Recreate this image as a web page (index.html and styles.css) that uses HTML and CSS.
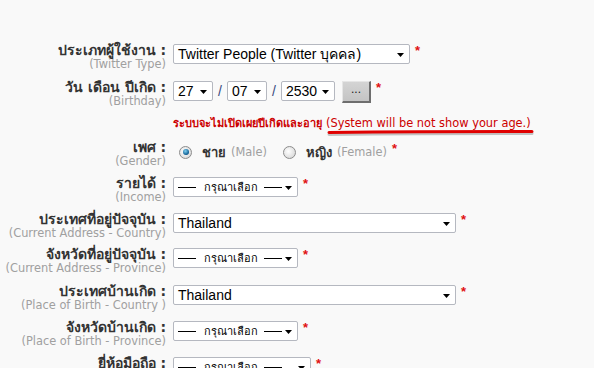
FILE: index.html
```html
<!DOCTYPE html>
<html lang="th">
<head>
<meta charset="utf-8">
<link rel="stylesheet" href="styles.css">
</head>
<body>
<div class="form">
  <div class="row r37">
    <div class="lbl"><div class="th">ประเภทผู้ใช้งาน :</div><div class="en">(Twitter Type)</div></div>
    <div class="field"><div class="sel" style="width:237px">Twitter People (Twitter บุคคล)<svg class="arr" width="7" height="4" viewBox="0 0 7 4"><path d="M0 0H7L3.5 4Z"/></svg></div><span class="req">*</span></div>
  </div>
  <div class="row r33">
    <div class="lbl"><div class="th">วัน เดือน ปีเกิด :</div><div class="en">(Birthday)</div></div>
    <div class="field">
      <div class="sel" style="width:40px">27<svg class="arr" width="7" height="4" viewBox="0 0 7 4"><path d="M0 0H7L3.5 4Z"/></svg></div>
      <span class="slash">/</span>
      <div class="sel" style="width:40px">07<svg class="arr" width="7" height="4" viewBox="0 0 7 4"><path d="M0 0H7L3.5 4Z"/></svg></div>
      <span class="slash">/</span>
      <div class="sel" style="width:54px">2530<svg class="arr" width="7" height="4" viewBox="0 0 7 4"><path d="M0 0H7L3.5 4Z"/></svg></div>
      <span class="btn">...</span><span class="req">*</span>
    </div>
  </div>
  <div class="row r27">
    <div></div>
    <div class="note"><b>ระบบจะไม่เปิดเผยปีเกิดและอายุ</b><span class="gap"></span>(System will be not show your age.)
      <svg class="mark" width="210" height="10" viewBox="0 0 210 10"><path class="sh" d="M3 5.5 Q100 4.5 206 4.5"/><path class="ln" d="M3 3.5 Q100 2.5 206 2.5"/></svg>
    </div>
  </div>
  <div class="row r36">
    <div class="lbl"><div class="th">เพศ :</div><div class="en">(Gender)</div></div>
    <div class="field gender">
      <span class="radio on"></span><b class="opt">ชาย</b><span class="en">(Male)</span>
      <span class="radio r2"></span><b class="opt">หญิง</b><span class="en">(Female)</span><span class="req">*</span>
    </div>
  </div>
  <div class="row r36">
    <div class="lbl"><div class="th">รายได้ :</div><div class="en">(Income)</div></div>
    <div class="field"><div class="sel" style="width:125px"><span class="dash"></span><span class="ph">กรุณาเลือก</span><span class="dash"></span><svg class="arr" width="7" height="4" viewBox="0 0 7 4"><path d="M0 0H7L3.5 4Z"/></svg></div><span class="req">*</span></div>
  </div>
  <div class="row r35">
    <div class="lbl"><div class="th">ประเทศที่อยู่ปัจจุบัน :</div><div class="en">(Current Address - Country)</div></div>
    <div class="field"><div class="sel" style="width:283px">Thailand<svg class="arr" width="7" height="4" viewBox="0 0 7 4"><path d="M0 0H7L3.5 4Z"/></svg></div><span class="req">*</span></div>
  </div>
  <div class="row r37">
    <div class="lbl"><div class="th">จังหวัดที่อยู่ปัจจุบัน :</div><div class="en">(Current Address - Province)</div></div>
    <div class="field"><div class="sel" style="width:125px"><span class="dash"></span><span class="ph">กรุณาเลือก</span><span class="dash"></span><svg class="arr" width="7" height="4" viewBox="0 0 7 4"><path d="M0 0H7L3.5 4Z"/></svg></div><span class="req">*</span></div>
  </div>
  <div class="row r36">
    <div class="lbl"><div class="th">ประเทศบ้านเกิด :</div><div class="en">(Place of Birth - Country )</div></div>
    <div class="field"><div class="sel" style="width:283px">Thailand<svg class="arr" width="7" height="4" viewBox="0 0 7 4"><path d="M0 0H7L3.5 4Z"/></svg></div><span class="req">*</span></div>
  </div>
  <div class="row r36">
    <div class="lbl"><div class="th">จังหวัดบ้านเกิด :</div><div class="en">(Place of Birth - Province)</div></div>
    <div class="field"><div class="sel" style="width:125px"><span class="dash"></span><span class="ph">กรุณาเลือก</span><span class="dash"></span><svg class="arr" width="7" height="4" viewBox="0 0 7 4"><path d="M0 0H7L3.5 4Z"/></svg></div><span class="req">*</span></div>
  </div>
  <div class="row r12">
    <div class="lbl"><div class="th">ยี่ห้อมือถือ :</div></div>
    <div class="field"><div class="sel" style="width:138px"><span class="dash"></span><span class="ph">กรุณาเลือก</span><span class="dash"></span><svg class="arr" width="7" height="4" viewBox="0 0 7 4"><path d="M0 0H7L3.5 4Z"/></svg></div><span class="req">*</span></div>
  </div>
</div>
</body>
</html>
```
FILE: styles.css
```css
html, body { margin: 0; padding: 0; }
body {
  background: #f9f9f9;
  font-family: Tahoma, "DejaVu Sans", sans-serif;
  color: #333;
  width: 594px;
  height: 368px;
  overflow: hidden;
}
.form { padding-top: 43px; }
.row {
  display: grid;
  grid-template-columns: 166px 1fr;
  column-gap: 7px;
}
.r12 { height: 12px; }
.r27 { height: 27px; }
.r33 { height: 33px; }
.r35 { height: 35px; }
.r36 { height: 36px; }
.r37 { height: 37px; }
.lbl { text-align: right; white-space: nowrap; }
.th {
  font-weight: bold;
  font-size: 14px;
  line-height: 14px;
  color: #333;
}
.en {
  font-family: "DejaVu Sans", Verdana, sans-serif;
  font-size: 11.4px;
  line-height: 14px;
  color: #a0a0a0;
  font-weight: normal;
}
.field {
  display: flex;
  align-items: center;
  height: 20px;
  margin-top: 1px;
}
.sel {
  box-sizing: border-box;
  height: 20px;
  border: 1px solid #b5b8c0;
  border-radius: 2px;
  background: #fff;
  font-family: "Liberation Sans", Arial, sans-serif;
  font-size: 14px;
  line-height: 18px;
  color: #000;
  padding-left: 4px;
  position: relative;
  display: flex;
  align-items: center;
  white-space: nowrap;
}
.sel .arr {
  position: absolute;
  right: 5px;
  top: 8px;
}
.sel .arr path { fill: #000; }
.dash {
  display: inline-block;
  width: 18px;
  height: 1px;
  background: #000;
  margin-left: 0;
}
.ph {
  font-size: 11px;
  margin: 0 6px 0 8px;
}
.slash {
  font-family: "Liberation Sans", Arial, sans-serif;
  font-size: 14px;
  color: #3a4a80;
  width: 14px;
  text-align: center;
}
.btn {
  box-sizing: border-box;
  width: 29px;
  height: 22px;
  margin-left: 7px;
  margin-top: 1px;
  background: linear-gradient(#d4d4d4, #c4c4c4);
  border-top: 1px solid #e6e6e6;
  border-left: 1px solid #e6e6e6;
  border-right: 2px solid #6e6e6e;
  border-bottom: 2px solid #6e6e6e;
  font-family: "Liberation Sans", Arial, sans-serif;
  font-size: 12px;
  line-height: 14px;
  text-align: center;
  color: #222;
}
.req {
  color: #e01010;
  font-family: "Liberation Sans", Arial, sans-serif;
  font-size: 13px;
  font-weight: bold;
  margin-left: 5px;
  align-self: flex-start;
  line-height: 14px;
}
.note {
  position: relative;
  color: #cc0000;
  font-family: "DejaVu Sans", Verdana, sans-serif;
  font-size: 11.4px;
  line-height: 14px;
  padding-top: 3px;
  white-space: nowrap;
}
.note b { font-family: Tahoma, "DejaVu Sans", sans-serif; font-size: 11px; }
.note .gap { display: inline-block; width: 4px; }
.mark {
  position: absolute;
  left: 153px;
  top: 16px;
}
.mark path { fill: none; stroke-linecap: round; }
.mark .ln { stroke: #e00000; stroke-width: 3; }
.mark .sh { stroke: rgba(0,0,0,0.22); stroke-width: 3; }
.gender { height: 20px; margin-top: 2px; }
.radio {
  box-sizing: border-box;
  width: 13px;
  height: 13px;
  border-radius: 50%;
  border: 1px solid #8c8c8c;
  background: radial-gradient(circle at 40% 40%, #ffffff, #d0d0d0);
  margin-left: 6px;
  position: relative;
}
.radio.on::after {
  content: "";
  position: absolute;
  left: 2.5px; top: 2.5px;
  width: 6px; height: 6px;
  border-radius: 50%;
  background: radial-gradient(circle at 40% 35%, #7fd0f0, #0a5a90 70%, #063050);
}
.gender .radio + .opt { margin-left: 10px; }
.gender .radio.r2 { margin-left: 16px; }
.opt { font-size: 13px; color: #333; }
.gender .en { margin-left: 5px; line-height: 20px; }
```
